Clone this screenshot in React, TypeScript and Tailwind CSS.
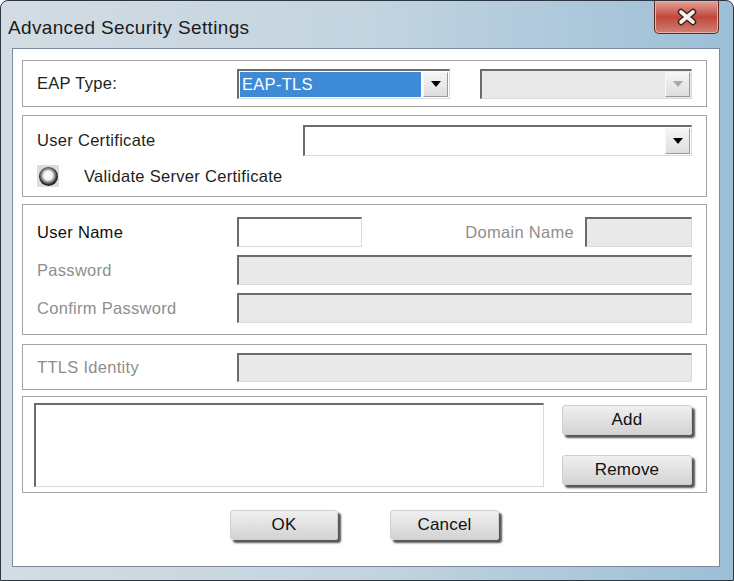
import React from "react";

function Field({ className = "", disabled = false }: { className?: string; disabled?: boolean }) {
  return (
    <div
      className={`border-t-2 border-l-2 border-b border-r border-t-[#6b6b6b] border-l-[#6b6b6b] border-b-[#dadada] border-r-[#dadada] ${
        disabled ? "bg-[#e9e9e9]" : "bg-white"
      } ${className}`}
    />
  );
}

function Arrow({ disabled = false }: { disabled?: boolean }) {
  return (
    <div className="flex h-full w-[25px] items-center justify-center border-l border-t border-l-[#f8f8f8] border-t-[#f8f8f8] border-r border-b border-r-[#9a9a9a] border-b-[#9a9a9a] bg-linear-to-b from-[#f5f5f5] to-[#dedede]">
      <svg width="10" height="6" viewBox="0 0 10 6">
        <path d="M0 0 L10 0 L5 6 Z" fill={disabled ? "#a8a8a8" : "#000"} />
      </svg>
    </div>
  );
}

function Btn({ label, className = "" }: { label: string; className?: string }) {
  return (
    <div
      className={`flex items-center justify-center rounded-[3px] border border-[#cfcfcf] bg-linear-to-b from-[#f0f0f0] to-[#d3d3d3] text-[17px] tracking-[0.2px] text-[#111] shadow-[3px_3px_2px_#555] ${className}`}
    >
      {label}
    </div>
  );
}

export default function App() {
  return (
    <div className="w-[734px] h-[581px] overflow-hidden bg-white font-['Liberation_Sans',Arial,sans-serif] text-[16.5px] tracking-[0.3px]">
      {/* Window frame */}
      <div className="flex h-full w-full flex-col rounded-t-[8px] border border-[#2b3640] bg-linear-to-r from-[#d3dce3] via-[#c3d4e0] to-[#9cbfd7]">
        {/* Title bar */}
        <div className="flex h-[47px] shrink-0 items-start justify-between pl-[7px] pr-[14px]">
          <div className="mt-[16px] text-[19px] leading-[22px] tracking-[0.35px] text-[#1b1b1b]">Advanced Security Settings</div>
          <div className="flex h-[33px] w-[65px] items-center justify-center rounded-b-[5px] border border-t-0 border-[#5e2a24] bg-linear-to-b from-[#e3a39a] via-[#c0463b] to-[#cf8075] shadow-[inset_0_0_0_1px_#eab0a8]">
            <svg width="24" height="18" viewBox="0 0 24 18">
              <path d="M6 4 L18 14 M18 4 L6 14" stroke="#41201c" strokeWidth="6.5" strokeLinecap="round" />
              <path d="M6 4 L18 14 M18 4 L6 14" stroke="#f2f2f2" strokeWidth="3.6" strokeLinecap="round" />
            </svg>
          </div>
        </div>

        {/* Client area */}
        <div className="ml-[11px] mr-[13px] flex h-[519px] shrink-0 flex-col border border-[#7b8a96] bg-white pl-[9px] pr-[12px] pt-[11px]">
          {/* EAP type */}
          <div className="flex h-[47px] items-center border border-[#a3a3a3] px-[14px]">
            <div className="w-[200px] text-[#1e1e1e]">EAP Type:</div>
            <div className="flex h-[30px] w-[213px] border-t-2 border-l-2 border-b border-r border-t-[#6b6b6b] border-l-[#6b6b6b] border-b-[#dadada] border-r-[#dadada] bg-white p-[1px]">
              <div className="flex flex-1 items-center bg-[#3d8ad6] pl-[2px] text-white">EAP-TLS</div>
              <div className="ml-[2px]">
                <Arrow />
              </div>
            </div>
            <div className="ml-[30px] flex h-[30px] flex-1 justify-end border-t-2 border-l-2 border-b border-r border-t-[#6b6b6b] border-l-[#6b6b6b] border-b-[#dadada] border-r-[#dadada] bg-[#e9e9e9] p-[1px]">
              <Arrow disabled />
            </div>
          </div>

          {/* User certificate */}
          <div className="mt-[8px] flex h-[82px] flex-col border border-[#a3a3a3] pl-[14px] pr-[14px] pt-[9px]">
            <div className="flex h-[31px] items-center">
              <div className="flex-1 text-[#1e1e1e]">User Certificate</div>
              <div className="flex h-[31px] w-[389px] justify-end border-t-2 border-l-2 border-b border-r border-t-[#6b6b6b] border-l-[#6b6b6b] border-b-[#dadada] border-r-[#dadada] bg-white p-[1px]">
                <Arrow />
              </div>
            </div>
            <div className="mt-[9px] flex h-[22px] items-center">
              <div className="flex h-[22px] w-[22px] items-center justify-center bg-[#dcdcdc]">
                <div className="h-[19px] w-[19px] rounded-full bg-[radial-gradient(circle_at_48%_45%,#ffffff_0%,#f4f4f4_30%,#9a9a9a_45%,#2a2a2a_62%,#303030_80%,#9a9a9a_100%)]" />
              </div>
              <div className="ml-[25px] text-[#1e1e1e]">Validate Server Certificate</div>
            </div>
          </div>

          {/* Credentials */}
          <div className="mt-[7px] flex h-[131px] flex-col gap-[8px] border border-[#a3a3a3] pl-[14px] pr-[14px] pt-[12px]">
            <div className="flex h-[30px] items-center">
              <div className="w-[200px] text-[#0e0e0e]">User Name</div>
              <Field className="h-[30px] w-[125px]" />
              <div className="flex-1 text-right text-[#8e8e8e]">Domain Name</div>
              <Field className="ml-[11px] h-[30px] w-[107px]" disabled />
            </div>
            <div className="flex h-[30px] items-center">
              <div className="w-[200px] text-[#8e8e8e]">Password</div>
              <Field className="h-[30px] flex-1" disabled />
            </div>
            <div className="flex h-[30px] items-center">
              <div className="w-[200px] text-[#8e8e8e]">Confirm Password</div>
              <Field className="h-[30px] flex-1" disabled />
            </div>
          </div>

          {/* TTLS */}
          <div className="mt-[9px] flex h-[46px] items-center border border-[#a3a3a3] px-[14px]">
            <div className="w-[200px] text-[#8e8e8e]">TTLS Identity</div>
            <Field className="h-[29px] flex-1" disabled />
          </div>

          {/* List */}
          <div className="mt-[6px] flex h-[97px] border border-[#a3a3a3] pl-[11px] pt-[6px]">
            <Field className="h-[84px] w-[510px]" />
            <div className="ml-[18px] flex flex-col gap-[20px] pt-[2px]">
              <Btn label="Add" className="h-[30px] w-[130px]" />
              <Btn label="Remove" className="h-[30px] w-[130px]" />
            </div>
          </div>

          {/* OK / Cancel */}
          <div className="mt-[17px] flex justify-center gap-[52px]">
            <Btn label="OK" className="h-[30px] w-[108px]" />
            <Btn label="Cancel" className="h-[30px] w-[109px]" />
          </div>
        </div>
      </div>
    </div>
  );
}
